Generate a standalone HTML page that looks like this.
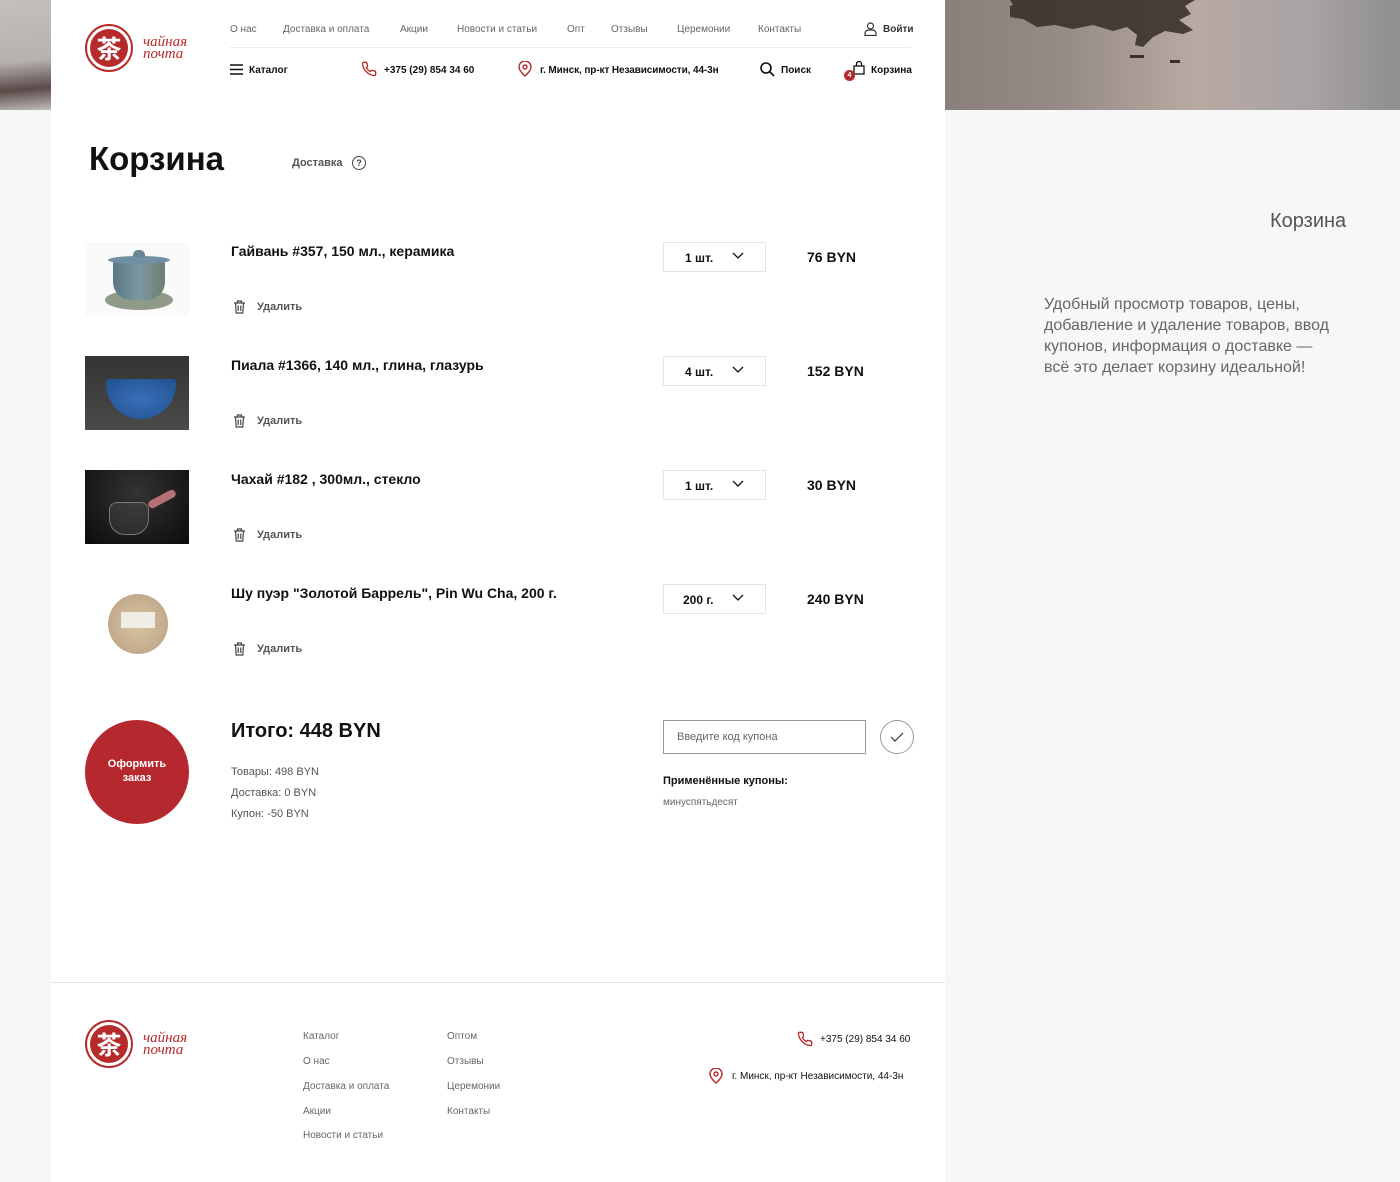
<!DOCTYPE html>
<html><head><meta charset="utf-8">
<style>
*{margin:0;padding:0;box-sizing:border-box}
body{width:1400px;height:1182px;background:#f7f7f7;font-family:"Liberation Sans","Noto Sans CJK SC",sans-serif;position:relative;overflow:hidden;color:#111}
.a{position:absolute;white-space:nowrap}
.panel{position:absolute;left:51px;top:0;width:894px;height:1182px;background:#fff}
.nav{font-size:10px;color:#666;top:24px}
.b{font-size:10px;font-weight:bold;color:#111}
.logo{position:absolute;width:48px;height:48px;border-radius:50%;border:2px solid #b52a2b;}
.logo::after{content:"";position:absolute;left:3px;top:3px;width:38px;height:38px;border-radius:50%;background:#b52a2b}
.logo span{position:absolute;left:0;top:0;width:44px;height:44px;line-height:44px;text-align:center;color:#fff;font-size:25px;font-weight:bold;z-index:2;font-family:"Noto Sans CJK SC",sans-serif}
.lt{position:absolute;color:#b52a2b;font-family:"Liberation Serif",serif;font-style:italic;font-size:15px;line-height:12px}
.pname{font-size:14px;font-weight:bold;color:#111;left:231px}
.del{font-size:11px;color:#555;left:257px;font-weight:bold}
.sel{position:absolute;left:663px;width:103px;height:30px;border:1px solid #e4e4e4;font-size:12px;font-weight:bold}
.sel b{position:absolute;left:21px;top:8px}
.sel svg{position:absolute;left:68px;top:9px}
.price{left:807px;font-size:14px;font-weight:bold}
.fl{font-size:10px;color:#666}
</style></head><body>
<div class="a" style="left:0;top:0;width:51px;height:110px;background:linear-gradient(175deg,#c4bfbd 0%,#b7b1ae 55%,#5a4a48 80%,#c2bcb9 100%)"></div>
<div class="a" style="left:945px;top:0;width:455px;height:110px;background:linear-gradient(90deg,#8a807b 0%,#958a86 25%,#b8a9a3 55%,#a8a3a4 80%,#8f8e90 100%)"></div>
<svg class="a" style="left:1010px;top:0" width="190" height="70"><path d="M0 0h185l-10 6 6 8-12 6 14 10-10 4-18-3-12 6-10 10-8-2 2-10-10-8-14 4-20-6-20 4-18-4-18 2-14-8-14-2-8-8 12-4z" fill="#3a322c" opacity=".9"/><path d="M120 55h14v3h-14zM160 60h10v3h-10z" fill="#3a322c"/></svg>
<div class="panel"></div>

<!-- header -->
<div class="logo" style="left:85px;top:24px"><span>茶</span></div>
<div class="lt" style="left:143px;top:36px">чайная<br>почта</div>
<div class="a nav" style="left:230px">О нас</div>
<div class="a nav" style="left:283px">Доставка и оплата</div>
<div class="a nav" style="left:400px">Акции</div>
<div class="a nav" style="left:457px">Новости и статьи</div>
<div class="a nav" style="left:567px">Опт</div>
<div class="a nav" style="left:611px">Отзывы</div>
<div class="a nav" style="left:677px">Церемонии</div>
<div class="a nav" style="left:758px">Контакты</div>
<svg class="a" style="left:864px;top:22px" width="13" height="14" viewBox="0 0 13 14" fill="none" stroke="#333" stroke-width="1.2"><circle cx="6.5" cy="4" r="3"/><path d="M1 13.5v-2a3.5 3.5 0 0 1 3.5-3.5h4a3.5 3.5 0 0 1 3.5 3.5v2z"/></svg>
<div class="a b" style="left:883px;top:24px;color:#333">Войти</div>
<div class="a" style="left:230px;top:47px;width:681px;height:1px;background:#ececec"></div>
<svg class="a" style="left:230px;top:64px" width="13" height="11"><path d="M0 1h13M0 5.5h13M0 10h13" stroke="#111" stroke-width="1.4"/></svg>
<div class="a b" style="left:249px;top:65px">Каталог</div>
<svg class="a" style="left:361px;top:61px" width="16" height="16" viewBox="0 0 24 24" fill="none" stroke="#b52a2b" stroke-width="2"><path d="M22 16.9v3a2 2 0 0 1-2.2 2 19.8 19.8 0 0 1-8.6-3.1 19.5 19.5 0 0 1-6-6A19.8 19.8 0 0 1 2.1 4.2 2 2 0 0 1 4.1 2h3a2 2 0 0 1 2 1.7c.1 1 .4 1.9.7 2.8a2 2 0 0 1-.5 2.1L8 9.9a16 16 0 0 0 6 6l1.3-1.3a2 2 0 0 1 2.1-.4c.9.3 1.8.6 2.8.7a2 2 0 0 1 1.7 2z"/></svg>
<div class="a b" style="left:384px;top:65px">+375 (29) 854 34 60</div>
<svg class="a" style="left:518px;top:61px" width="14" height="16" viewBox="0 0 14 16" fill="none" stroke="#b52a2b" stroke-width="1.4"><path d="M7 15s6-5 6-9A6 6 0 0 0 1 6c0 4 6 9 6 9z"/><circle cx="7" cy="6" r="2"/></svg>
<div class="a b" style="left:540px;top:65px;letter-spacing:-.1px">г. Минск, пр-кт Независимости, 44-3н</div>
<svg class="a" style="left:760px;top:62px" width="15" height="15" fill="none" stroke="#111" stroke-width="1.6"><circle cx="6" cy="6" r="5"/><path d="M9.5 9.5l4.5 4.5"/></svg>
<div class="a b" style="left:781px;top:65px">Поиск</div>
<svg class="a" style="left:853px;top:61px" width="12" height="14" fill="none" stroke="#111" stroke-width="1.3"><rect x="1" y="5" width="10" height="8"/><path d="M3.5 5V3a2.5 2.5 0 0 1 5 0v2"/></svg>
<div class="a" style="left:844px;top:70px;width:11px;height:11px;border-radius:50%;background:#b52a2b;color:#fff;font-size:7px;font-weight:bold;text-align:center;line-height:11px">4</div>
<div class="a b" style="left:871px;top:65px">Корзина</div>

<!-- title -->
<div class="a" style="left:89px;top:140px;font-size:33px;font-weight:bold">Корзина</div>
<div class="a" style="left:292px;top:157px;font-size:11px;color:#555;font-weight:bold">Доставка</div>
<div class="a" style="left:352px;top:156px;width:14px;height:14px;border:1.2px solid #444;border-radius:50%;font-size:9px;text-align:center;line-height:12px;color:#444;font-weight:bold">?</div>

<!-- items -->
<div class="a" style="left:85px;top:242px;width:104px;height:74px;background:#fafafa"></div>
<div class="a" style="left:105px;top:290px;width:68px;height:20px;border-radius:50%;background:#8f9a88"></div>
<div class="a" style="left:113px;top:258px;width:52px;height:42px;border-radius:4px 4px 18px 18px;background:linear-gradient(90deg,#5b7686,#7c98a0,#6e7f70)"></div>
<div class="a" style="left:108px;top:256px;width:62px;height:8px;border-radius:50%;background:#7190a4"></div>
<div class="a" style="left:133px;top:250px;width:12px;height:7px;border-radius:5px 5px 0 0;background:#6b8595"></div>

<div class="a" style="left:85px;top:356px;width:104px;height:74px;background:linear-gradient(#343434,#4a4a48)"></div>
<div class="a" style="left:106px;top:379px;width:70px;height:40px;border-radius:3px 3px 35px 35px;background:radial-gradient(#3a6fb8,#20508f)"></div>

<div class="a" style="left:85px;top:470px;width:104px;height:74px;background:radial-gradient(circle at 50% 30%,#333,#0b0b0b)"></div>
<div class="a" style="left:109px;top:502px;width:40px;height:33px;border-radius:8px 8px 16px 16px;border:1px solid #777;background:rgba(120,120,120,.2)"></div>
<div class="a" style="left:147px;top:495px;width:30px;height:8px;background:#b57077;transform:rotate(-28deg);border-radius:4px"></div>

<div class="a" style="left:108px;top:594px;width:60px;height:60px;border-radius:50%;background:radial-gradient(#d8c4a5,#b8a081)"></div>
<div class="a" style="left:121px;top:612px;width:34px;height:16px;background:#f0ece6"></div>

<div class="a pname" style="top:243px">Гайвань #357, 150 мл., керамика</div>
<div class="a pname" style="top:357px">Пиала #1366, 140 мл., глина, глазурь</div>
<div class="a pname" style="top:471px">Чахай #182 , 300мл., стекло</div>
<div class="a pname" style="top:585px">Шу пуэр "Золотой Баррель", Pin Wu Cha, 200 г.</div>

<svg width="0" height="0" style="position:absolute"><defs><g id="tr" fill="none" stroke="#444" stroke-width="1.2"><path d="M1 3h11M4.5 3V1h4v2M2.5 3l.7 10h6.6l.7-10M5.2 5.5v5.5M7.8 5.5v5.5"/></g><path id="ch" d="M1 1l5 5 5-5" fill="none" stroke="#111" stroke-width="1.3"/></defs></svg>
<svg class="a" style="left:233px;top:300px" width="13" height="14"><use href="#tr"/></svg><div class="a del" style="top:301px">Удалить</div>
<svg class="a" style="left:233px;top:414px" width="13" height="14"><use href="#tr"/></svg><div class="a del" style="top:415px">Удалить</div>
<svg class="a" style="left:233px;top:528px" width="13" height="14"><use href="#tr"/></svg><div class="a del" style="top:529px">Удалить</div>
<svg class="a" style="left:233px;top:642px" width="13" height="14"><use href="#tr"/></svg><div class="a del" style="top:643px">Удалить</div>

<div class="sel" style="top:242px"><b>1 шт.</b><svg width="12" height="8"><use href="#ch"/></svg></div>
<div class="sel" style="top:356px"><b>4 шт.</b><svg width="12" height="8"><use href="#ch"/></svg></div>
<div class="sel" style="top:470px"><b>1 шт.</b><svg width="12" height="8"><use href="#ch"/></svg></div>
<div class="sel" style="top:584px"><b style="left:19px">200 г.</b><svg width="12" height="8"><use href="#ch"/></svg></div>
<div class="a price" style="top:249px">76 BYN</div>
<div class="a price" style="top:363px">152 BYN</div>
<div class="a price" style="top:477px">30 BYN</div>
<div class="a price" style="top:591px">240 BYN</div>

<!-- total -->
<div class="a" style="left:85px;top:720px;width:104px;height:104px;border-radius:50%;background:#b5282d;color:#fff;font-size:11px;font-weight:bold;text-align:center;padding-top:37px;line-height:14px">Оформить<br>заказ</div>
<div class="a" style="left:231px;top:720px;font-size:20px;font-weight:bold">Итого: 448 BYN</div>
<div class="a" style="left:231px;top:766px;font-size:11px;color:#555">Товары: 498 BYN</div>
<div class="a" style="left:231px;top:787px;font-size:11px;color:#555">Доставка: 0 BYN</div>
<div class="a" style="left:231px;top:808px;font-size:11px;color:#555">Купон: -50 BYN</div>
<div class="a" style="left:663px;top:720px;width:203px;height:34px;border:1px solid #999;font-size:11px;color:#666;padding:10px 0 0 13px">Введите код купона</div>
<div class="a" style="left:880px;top:720px;width:34px;height:34px;border:1px solid #999;border-radius:50%"></div>
<svg class="a" style="left:890px;top:732px" width="14" height="11"><path d="M1 5l4 4 8-8" fill="none" stroke="#333" stroke-width="1.2"/></svg>
<div class="a" style="left:663px;top:775px;font-size:11px;font-weight:bold">Применённые купоны:</div>
<div class="a" style="left:663px;top:797px;font-size:10px;color:#666">минуспятьдесят</div>

<!-- footer -->
<div class="a" style="left:51px;top:982px;width:894px;height:1px;background:#e6e6e6"></div>
<div class="logo" style="left:85px;top:1020px"><span>茶</span></div>
<div class="lt" style="left:143px;top:1032px">чайная<br>почта</div>
<div class="a fl" style="left:303px;top:1031px">Каталог</div>
<div class="a fl" style="left:303px;top:1056px">О нас</div>
<div class="a fl" style="left:303px;top:1081px">Доставка и оплата</div>
<div class="a fl" style="left:303px;top:1106px">Акции</div>
<div class="a fl" style="left:303px;top:1130px">Новости и статьи</div>
<div class="a fl" style="left:447px;top:1031px">Оптом</div>
<div class="a fl" style="left:447px;top:1056px">Отзывы</div>
<div class="a fl" style="left:447px;top:1081px">Церемонии</div>
<div class="a fl" style="left:447px;top:1106px">Контакты</div>
<svg class="a" style="left:797px;top:1031px" width="16" height="16" viewBox="0 0 24 24" fill="none" stroke="#b52a2b" stroke-width="2"><path d="M22 16.9v3a2 2 0 0 1-2.2 2 19.8 19.8 0 0 1-8.6-3.1 19.5 19.5 0 0 1-6-6A19.8 19.8 0 0 1 2.1 4.2 2 2 0 0 1 4.1 2h3a2 2 0 0 1 2 1.7c.1 1 .4 1.9.7 2.8a2 2 0 0 1-.5 2.1L8 9.9a16 16 0 0 0 6 6l1.3-1.3a2 2 0 0 1 2.1-.4c.9.3 1.8.6 2.8.7a2 2 0 0 1 1.7 2z"/></svg>
<div class="a" style="left:820px;top:1034px;font-size:10px;color:#111">+375 (29) 854 34 60</div>
<svg class="a" style="left:709px;top:1068px" width="14" height="16" viewBox="0 0 14 16" fill="none" stroke="#b52a2b" stroke-width="1.4"><path d="M7 15s6-5 6-9A6 6 0 0 0 1 6c0 4 6 9 6 9z"/><circle cx="7" cy="6" r="2"/></svg>
<div class="a" style="left:732px;top:1071px;font-size:10px;color:#111">г. Минск, пр-кт Независимости, 44-3н</div>

<!-- side -->
<div class="a" style="left:1270px;top:210px;font-size:20px;color:#555">Корзина</div>
<div class="a" style="left:1044px;top:294px;font-size:16px;color:#666;line-height:21px;white-space:normal;width:298px">Удобный просмотр товаров, цены, добавление и удаление товаров, ввод купонов, информация о доставке — всё это делает корзину идеальной!</div>
</body></html>
